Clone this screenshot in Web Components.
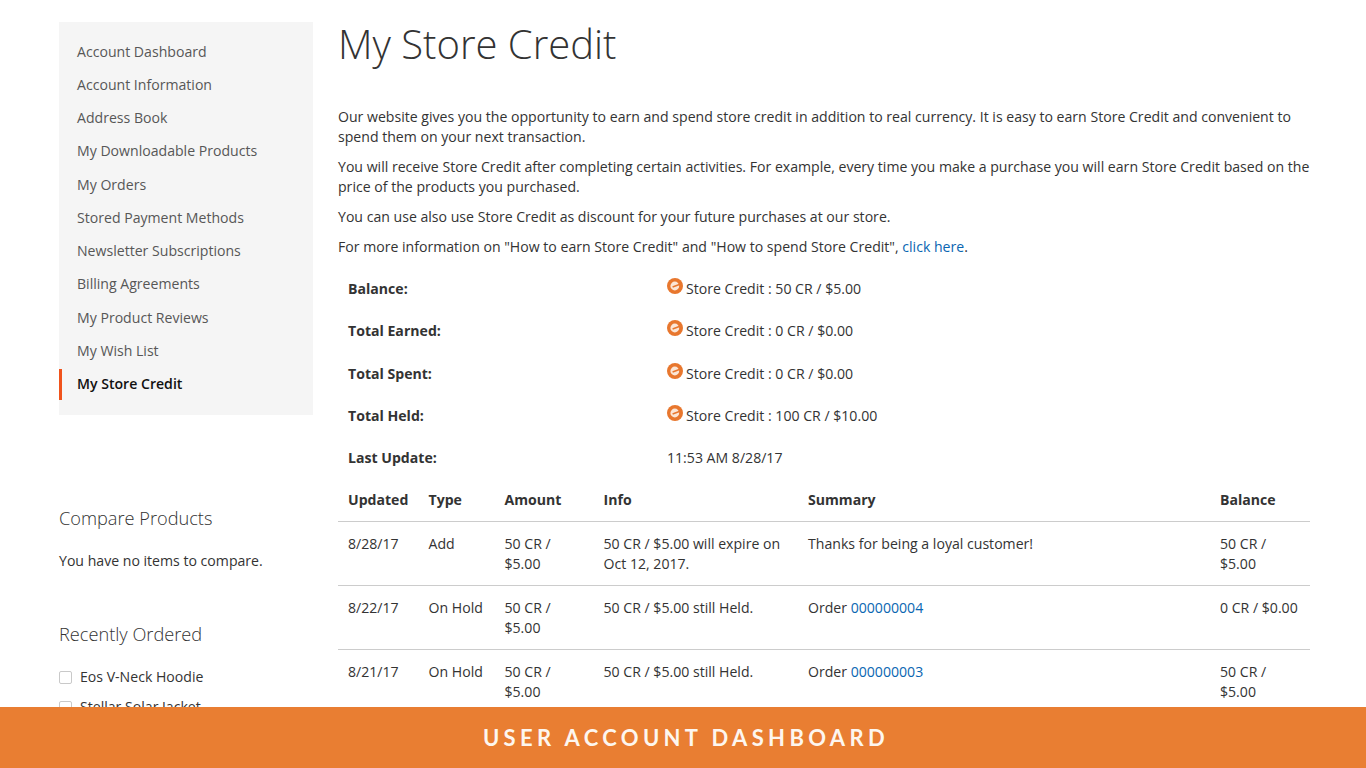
<!DOCTYPE html>
<html><head><meta charset="utf-8">
<style>
html,body{margin:0;padding:0;height:768px;overflow:hidden;background:#fff}
body{font:14.1px/20px "Open Sans",sans-serif;color:#333}
</style></head><body>
<template id="t-page"><style>
:host{display:flex;height:768px;overflow:hidden;box-sizing:border-box;padding:22px 56px 0 59px;gap:25px;align-items:flex-start}
.side{flex:0 0 254px;display:block}
.main{flex:1;min-width:0;display:block}
</style><div class="side"><slot name="side"></slot></div><div class="main"><slot></slot></div></template>

<template id="t-nav"><style>
:host{display:block;background:#f5f5f5;padding:12.7px 0 15.5px;margin-bottom:90px}
</style><slot></slot></template>

<template id="t-item"><style>
:host{display:block;height:33.25px;line-height:33.25px;padding-left:18px;color:#575757;font-size:14.1px;box-sizing:border-box;white-space:nowrap}
:host([active]){color:#111;font-weight:600;border-left:3px solid #f0531c;padding-left:15px;height:30.5px;line-height:29.5px;margin-top:2px}
</style><slot></slot></template>

<template id="t-block"><style>
:host{display:block;margin-bottom:50px}
h3{margin:0 0 20px;font-weight:300;font-size:18.2px;line-height:26px;color:#333}
</style><h3><slot name="title"></slot></h3><slot></slot></template>

<template id="t-check"><style>
:host{display:flex;align-items:center;gap:8px;height:30px;font-size:14.1px;white-space:nowrap;color:#333}
:host(:first-of-type){margin-top:-5px}
i{width:11px;height:11px;border:1px solid #c9c9c9;border-radius:2px;background:#fff;display:block}
</style><i></i><slot></slot></template>

<template id="t-rows"><style>
:host{display:grid;grid-template-columns:329px 1fr;margin-top:11px}
</style><slot></slot></template>

<template id="t-credit"><style>
:host{display:contents}
.k,.v{height:42.3px;line-height:42.3px;white-space:nowrap;font-size:14.1px}
.k{font-weight:700;padding-left:10px;color:#333}
.v{display:flex;align-items:center;gap:3px;color:#333}
svg{flex:none;margin-top:-6px}
</style><div class="k"><slot name="k"></slot></div><div class="v"><svg id="ic" width="16" height="16" viewBox="0 0 16 16"><circle cx="8" cy="8" r="8" fill="#e8772e"/><circle cx="7.8" cy="8" r="4.4" fill="#fbe6d6"/><path d="M5.6 8.9 13 6.2" stroke="#e8772e" stroke-width="1.6"/></svg><slot></slot></div></template>

<template id="t-table"><style>
:host{display:grid;grid-template-columns:80.5px 76px 99px 204.5px 412px 1fr;font-size:14.1px}
</style><slot></slot></template>

<template id="t-th"><style>
:host{display:block;font-weight:700;padding:0 0 0 10px;line-height:42px;border-bottom:1px solid #ccc;color:#333;white-space:nowrap;box-sizing:border-box;height:43px}
</style><slot></slot></template>

<template id="t-td"><style>
:host{display:block;padding:11.5px 10px 11px;border-bottom:1px solid #ccc;line-height:20px;height:63.8px;box-sizing:border-box;color:#333}
</style><slot></slot></template>

<template id="t-banner"><style>
:host{position:fixed;left:0;right:0;bottom:0;height:61px;box-sizing:border-box;padding-left:6px;background:#e97e32;color:#fdf6ef;display:flex;align-items:center;justify-content:center;font:700 22px/1 Lato,sans-serif;letter-spacing:4.35px;white-space:nowrap}
</style><slot></slot></template>

<template id="t-prose"><style>
:host{display:block;font-size:14.1px;line-height:20px;color:#333}
h1{font-weight:300;font-size:40px;line-height:44px;margin:0 0 41px;color:#333}
::slotted(p){margin:0 0 10px}
</style><h1><slot name="title"></slot></h1><slot></slot></template>

<my-page>
 <div slot="side">
  <my-nav>
   <my-item>Account Dashboard</my-item><my-item>Account Information</my-item><my-item>Address Book</my-item><my-item>My Downloadable Products</my-item><my-item>My Orders</my-item><my-item>Stored Payment Methods</my-item><my-item>Newsletter Subscriptions</my-item><my-item>Billing Agreements</my-item><my-item>My Product Reviews</my-item><my-item>My Wish List</my-item><my-item active>My Store Credit</my-item>
  </my-nav>
  <my-block><span slot="title">Compare Products</span><span>You have no items to compare.</span></my-block>
  <my-block><span slot="title">Recently Ordered</span><my-check>Eos V-Neck Hoodie</my-check><my-check>Stellar Solar Jacket</my-check></my-block>
 </div>
 <my-prose>
  <span slot="title">My Store Credit</span>
  <p>Our website gives you the opportunity to earn and spend store credit in addition to real currency. It is easy to earn Store Credit and convenient to spend them on your next transaction.</p>
  <p>You will receive Store Credit after completing certain activities. For example, every time you make a purchase you will earn Store Credit based on the price of the products you purchased.</p>
  <p>You can use also use Store Credit as discount for your future purchases at our store.</p>
  <p>For more information on "How to earn Store Credit" and "How to spend Store Credit", <a style="color:#0a66b2;text-decoration:none">click here</a>.</p>
 </my-prose>
 <my-rows>
  <my-credit><span slot="k">Balance:</span>Store Credit : 50 CR / $5.00</my-credit>
  <my-credit><span slot="k">Total Earned:</span>Store Credit : 0 CR / $0.00</my-credit>
  <my-credit><span slot="k">Total Spent:</span>Store Credit : 0 CR / $0.00</my-credit>
  <my-credit><span slot="k">Total Held:</span>Store Credit : 100 CR / $10.00</my-credit>
  <my-credit plain><span slot="k">Last Update:</span>11:53 AM 8/28/17</my-credit>
 </my-rows>
 <my-table>
  <my-th>Updated</my-th><my-th>Type</my-th><my-th>Amount</my-th><my-th>Info</my-th><my-th>Summary</my-th><my-th>Balance</my-th>
  <my-td>8/28/17</my-td><my-td>Add</my-td><my-td>50 CR / $5.00</my-td><my-td>50 CR / $5.00 will expire on Oct 12, 2017.</my-td><my-td>Thanks for being a loyal customer!</my-td><my-td>50 CR / $5.00</my-td>
  <my-td>8/22/17</my-td><my-td>On Hold</my-td><my-td>50 CR / $5.00</my-td><my-td>50 CR / $5.00 still Held.</my-td><my-td>Order <a style="color:#0a66b2">000000004</a></my-td><my-td>0 CR / $0.00</my-td>
  <my-td>8/21/17</my-td><my-td>On Hold</my-td><my-td>50 CR / $5.00</my-td><my-td>50 CR / $5.00 still Held.</my-td><my-td>Order <a style="color:#0a66b2">000000003</a></my-td><my-td>50 CR / $5.00</my-td>
 </my-table>
</my-page>
<my-banner>USER ACCOUNT DASHBOARD</my-banner>
<script>
const map={page:'t-page',nav:'t-nav',item:'t-item',block:'t-block',check:'t-check',rows:'t-rows',credit:'t-credit',table:'t-table',th:'t-th',td:'t-td',banner:'t-banner',prose:'t-prose'};
for(const [n,t] of Object.entries(map)){
 customElements.define('my-'+n,class extends HTMLElement{constructor(){super();const r=this.attachShadow({mode:'open'});r.appendChild(document.getElementById(t).content.cloneNode(true));if(this.hasAttribute('plain')){r.getElementById('ic').style.display='none'}}});
}
</script>
</body></html>
